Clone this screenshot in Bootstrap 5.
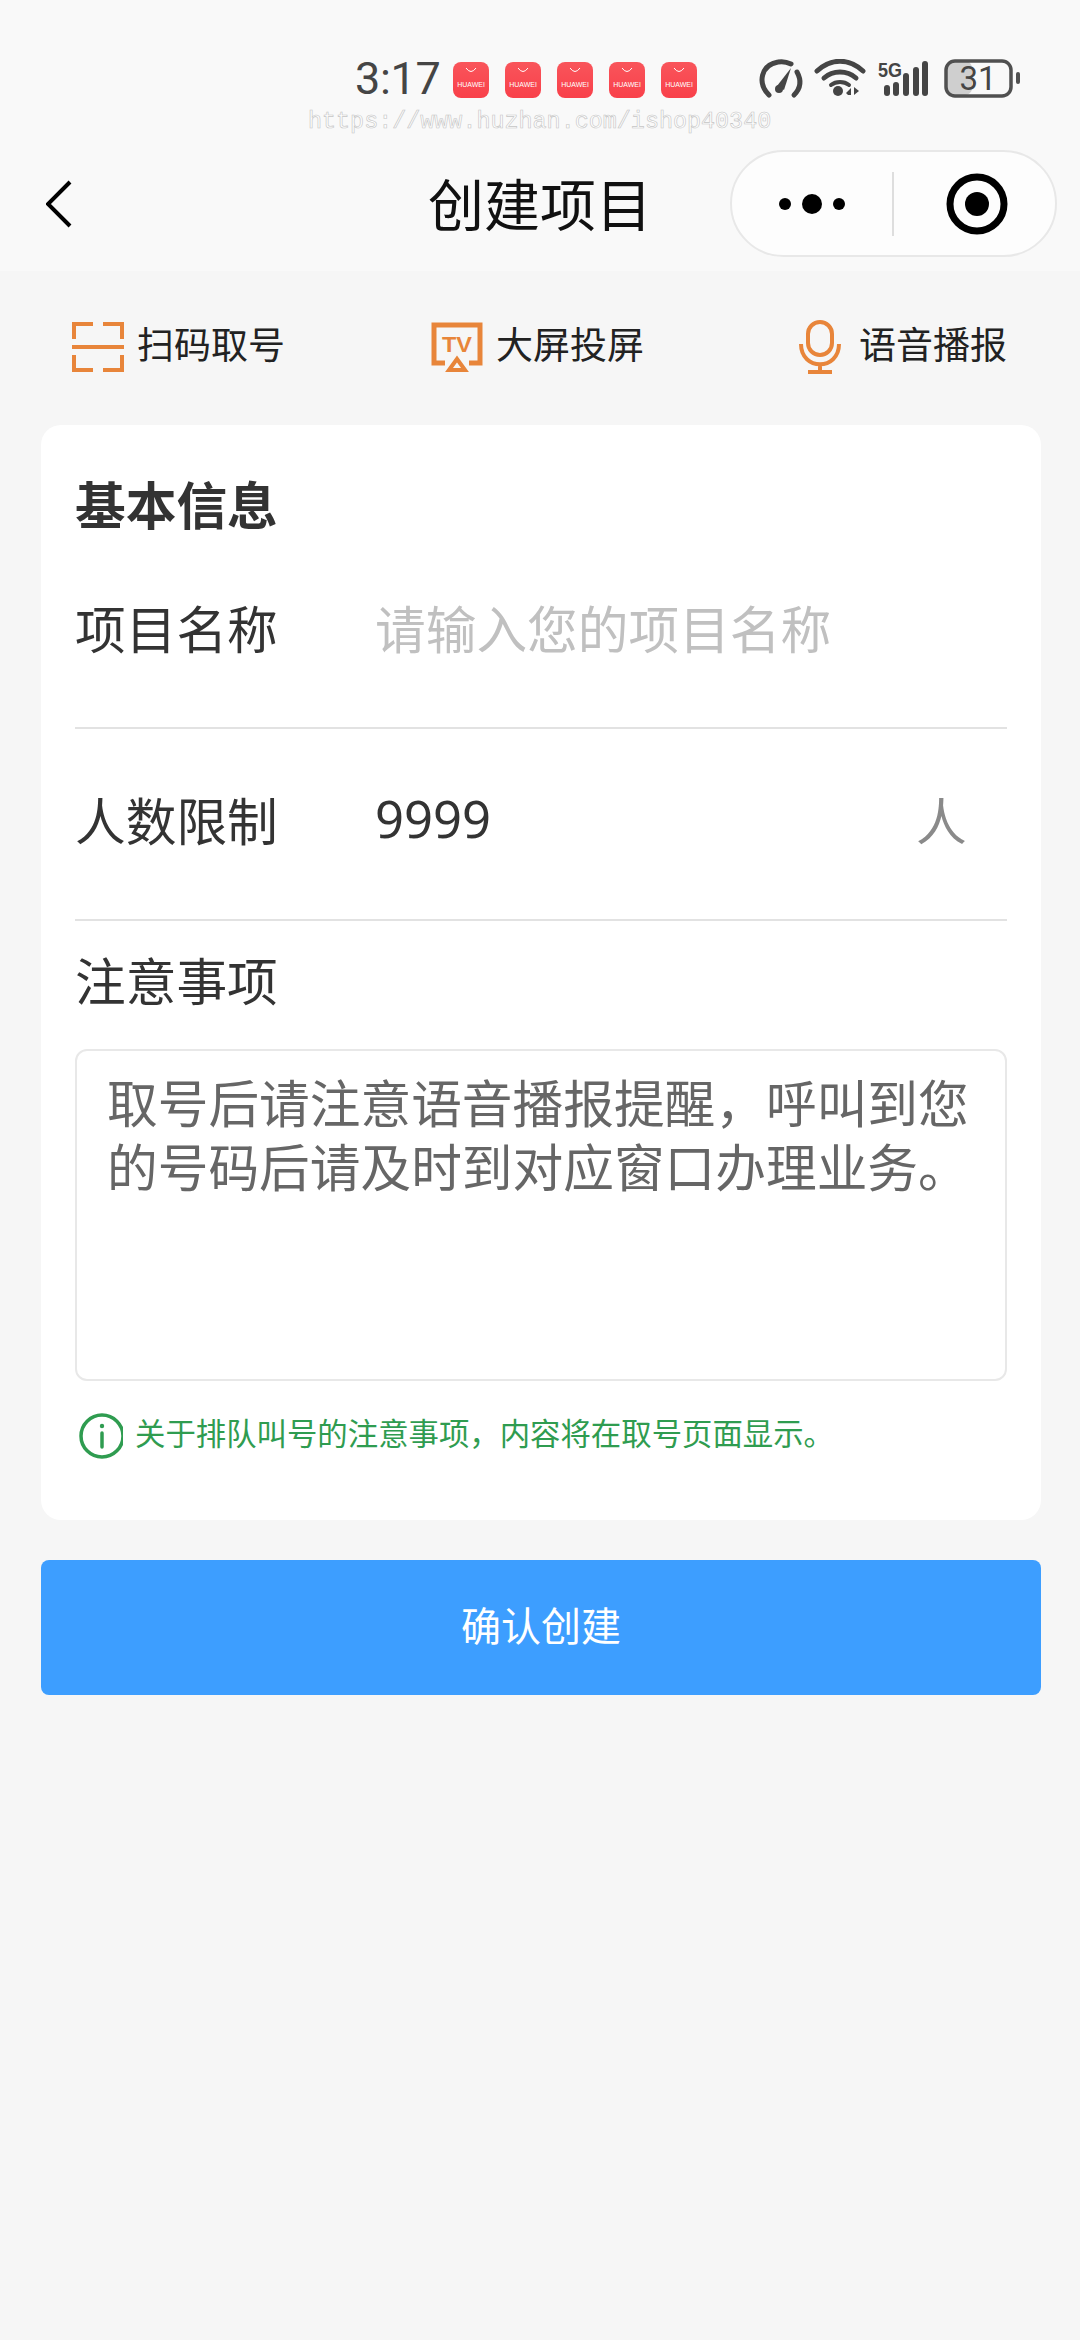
<!DOCTYPE html>
<html lang="zh">
<head>
    <meta charset="UTF-8">
    <meta name="viewport" content="width=device-width, initial-scale=1.0">
    <title>创建项目</title>
    <link href="https://cdn.jsdelivr.net/npm/bootstrap@5.3.0/dist/css/bootstrap.min.css" rel="stylesheet">
    <style>
        body {
            background: #f6f6f6;
            font-family: "Noto Sans CJK SC", "Noto Sans", sans-serif;
            color: #333;
        }
        .top-area { background: #f9f9f9; height: 271px; overflow: hidden; }

        .status-row { height: 44px; margin-top: 58px; padding-left: 355px; color: #454545; }
        .status-time { font-family: Roboto, sans-serif; font-size: 45px; line-height: 42px; padding-bottom: 2px; width: 98px; letter-spacing: -.3px; }
        .app-tile {
            width: 36px; height: 36px; margin-right: 16px; border-radius: 8px;
            background: linear-gradient(#f9555b, #f9404a);
            color: #fff; font-family: "Liberation Sans", sans-serif; font-size: 7px; line-height: 8px;
        }
        .app-tile svg { display: block; margin-top: 3px; margin-bottom: 5px; }
        .status-icons { margin-left: 45px; }

        .watermark {
            height: 28px; padding-left: 308px; margin-top: 6px;
            font-family: "Liberation Mono", monospace; font-size: 23.4px; line-height: 28px;
            color: #fff; -webkit-text-stroke: .6px #c4c4c4;
        }

        .title-row { display: grid; grid-template-columns: 1fr auto 1fr; height: 107px; margin-top: 14px; }
        .title-text { font-size: 56px; line-height: 103px; color: #111; }
        .back-link { padding-left: 46px; }
        .capsule {
            width: 327px; height: 107px; margin-right: 23px; border-radius: 54px;
            background: #fdfdfd; border: 2px solid #e8e8e8;
        }
        .capsule-left { width: 160px; }
        .capsule-sep { width: 2px; height: 64px; background: #dedede; }
        .capsule-right { padding-left: 5px; }

        .tool-row { height: 154px; padding: 0 73px 2px 72px; }
        .tool-label { font-size: 37px; color: #222; line-height: 50px; padding-bottom: 8px; margin-left: -3px; }

        .form-box { margin: 0 39px 0 41px; padding: 49px 34px 60px; background: #fff; border-radius: 20px; }
        .box-title { font-size: 50.7px; font-weight: 700; line-height: 59px; margin-bottom: 4px; color: #333; }
        .field-row { height: 192px; padding-bottom: 9px; border-bottom: 2px solid #e2e2e2; }
        .field-name { width: 300px; font-size: 50.7px; color: #333; }
        .field-input {
            border: 0; padding: 0; background: transparent; border-radius: 0; box-shadow: none;
            font-size: 50.7px; color: #333;
        }
        .field-input::placeholder { color: #c0c0c0; }
        .field-number { font-family: "Noto Sans", sans-serif; }
        .field-unit { width: 91px; font-size: 50.7px; color: #8a8a8a; }
        .area-label { margin-top: 23px; font-size: 50.7px; line-height: 70px; color: #333; }
        .area-input {
            height: 332px; margin-top: 35px; padding: 18px 30px; resize: none;
            border: 2px solid #e8e8e8; border-radius: 12px;
            font-size: 50.7px; line-height: 64px; color: #666;
        }
        .hint-row { margin-top: 31px; font-size: 30.4px; color: #2f9c50; }
        .hint-icon { margin-right: 12px; }
        .hint-text { line-height: 40px; padding-bottom: 8px; }

        .submit-btn {
            display: block; width: 1000px; height: 135px; margin: 40px 0 0 41px; padding: 0 0 8px;
            border: 0; border-radius: 8px; background: #3d9eff; color: #fff; font-size: 40px;
        }
    </style>
</head>
<body>
    <div class="top-area">
        <!-- status bar -->
        <div class="status-row d-flex align-items-center">
            <div class="status-time">3:17</div>
            <div class="app-tile text-center">
                <svg width="36" height="11" viewBox="0 0 36 11"><path d="M13 3q5 7 10 0" fill="none" stroke="#fff" stroke-width="1"/></svg>HUAWEI
            </div>
            <div class="app-tile text-center">
                <svg width="36" height="11" viewBox="0 0 36 11"><path d="M13 3q5 7 10 0" fill="none" stroke="#fff" stroke-width="1"/></svg>HUAWEI
            </div>
            <div class="app-tile text-center">
                <svg width="36" height="11" viewBox="0 0 36 11"><path d="M13 3q5 7 10 0" fill="none" stroke="#fff" stroke-width="1"/></svg>HUAWEI
            </div>
            <div class="app-tile text-center">
                <svg width="36" height="11" viewBox="0 0 36 11"><path d="M13 3q5 7 10 0" fill="none" stroke="#fff" stroke-width="1"/></svg>HUAWEI
            </div>
            <div class="app-tile text-center">
                <svg width="36" height="11" viewBox="0 0 36 11"><path d="M13 3q5 7 10 0" fill="none" stroke="#fff" stroke-width="1"/></svg>HUAWEI
            </div>
            <svg class="status-icons" width="266" height="42" viewBox="0 0 266 42">
                <!-- gauge -->
                <path d="M11 36C-1 24 3 6 20 3c5-1 9 0 13 2" fill="none" stroke="#454545" stroke-width="5" stroke-linecap="round"/>
                <path d="M39 13c5 9 3 17-3 23" fill="none" stroke="#454545" stroke-width="5" stroke-linecap="round"/>
                <path d="M19 27l14-18-7 22z" fill="#454545"/>
                <circle cx="21" cy="30" r="4" fill="#454545"/>
                <!-- wifi -->
                <path d="M59 12c14-13 32-13 46 0" fill="none" stroke="#454545" stroke-width="5" stroke-linecap="round"/>
                <path d="M66 19c9-8 23-8 32 0" fill="none" stroke="#454545" stroke-width="5" stroke-linecap="round"/>
                <path d="M73 26c5-4 13-4 18 0" fill="none" stroke="#454545" stroke-width="4" stroke-linecap="round"/>
                <circle cx="80" cy="32" r="5" fill="#454545"/>
                <path d="M90 36h3v-7l-5 5zM96 28v8l5-4z" fill="#454545"/>
                <!-- 5G and signal -->
                <text x="120" y="18" font-family="Liberation Sans, sans-serif" font-size="21" font-weight="700" textLength="24" lengthAdjust="spacingAndGlyphs" fill="#454545">5G</text>
                <rect x="126" y="26" width="6" height="11" rx="3" fill="#454545"/>
                <rect x="135" y="23" width="6" height="14" rx="3" fill="#454545"/>
                <rect x="145" y="14" width="6" height="23" rx="3" fill="#454545"/>
                <rect x="155" y="8" width="6" height="29" rx="3" fill="#454545"/>
                <rect x="164" y="2" width="6" height="35" rx="3" fill="#454545"/>
                <!-- battery -->
                <rect x="189" y="2" width="25" height="34" rx="7" fill="#cfcfcf"/>
                <rect x="188" y="2" width="65" height="35" rx="9" fill="none" stroke="#505050" stroke-width="3.5"/>
                <text x="220" y="31" text-anchor="middle" font-family="Roboto, sans-serif" font-size="33" fill="#454545">31</text>
                <rect x="258" y="13" width="4" height="12" rx="2" fill="#505050"/>
            </svg>
        </div>

        <div class="watermark">https://www.huzhan.com/ishop40340</div>

        <!-- nav bar -->
        <div class="title-row">
            <div class="back-link d-flex align-items-center">
                <svg width="26" height="48" viewBox="0 0 26 48"><path d="M24 2L2 24l22 22" fill="none" stroke="#000" stroke-width="4"/></svg>
            </div>
            <div class="title-text">创建项目</div>
            <div class="d-flex justify-content-end">
                <div class="capsule d-flex align-items-center">
                    <div class="capsule-left d-flex justify-content-center">
                        <svg width="66" height="24" viewBox="0 0 66 24">
                            <circle cx="6" cy="12" r="6" fill="#000"/>
                            <circle cx="33" cy="12" r="10" fill="#000"/>
                            <circle cx="60" cy="12" r="6" fill="#000"/>
                        </svg>
                    </div>
                    <div class="capsule-sep"></div>
                    <div class="capsule-right flex-grow-1 d-flex justify-content-center">
                        <svg width="62" height="62" viewBox="0 0 62 62">
                            <circle cx="31" cy="31" r="27" fill="none" stroke="#000" stroke-width="7"/>
                            <circle cx="31" cy="31" r="12" fill="#000"/>
                        </svg>
                    </div>
                </div>
            </div>
        </div>
    </div>

    <!-- quick tools -->
    <div class="tool-row d-flex justify-content-between align-items-center">
        <div class="d-flex align-items-center gap-3">
            <svg width="52" height="50" viewBox="0 0 52 50" fill="none" stroke="#e8853a" stroke-width="4">
                <path d="M21 2H2v15M31 2h19v15M2 33v15h19M50 33v15H31"/>
                <path d="M0 25h52"/>
            </svg>
            <span class="tool-label">扫码取号</span>
        </div>
        <div class="d-flex align-items-center gap-3 me-2">
            <svg width="52" height="50" viewBox="0 0 52 50" fill="none" stroke="#e8853a" stroke-width="5">
                <path d="M14 41H3V3h46v38H38"/>
                <path d="M26 37l8 11H18z" stroke-width="4"/>
                <text x="26" y="30" text-anchor="middle" font-family="Liberation Sans, sans-serif" font-size="22" font-weight="700" textLength="30" lengthAdjust="spacingAndGlyphs" fill="#e8853a" stroke="none">TV</text>
            </svg>
            <span class="tool-label">大屏投屏</span>
        </div>
        <div class="d-flex align-items-center gap-3">
            <svg class="me-1" width="44" height="54" viewBox="0 0 44 54" fill="none" stroke="#e8853a" stroke-width="4">
                <rect x="10" y="2" width="24" height="33" rx="12"/>
                <path d="M3 24c0 27 38 27 38 0M22 44v8M10 52h24"/>
            </svg>
            <span class="tool-label">语音播报</span>
        </div>
    </div>

    <!-- form -->
    <div class="form-box">
        <div class="box-title">基本信息</div>
        <div class="field-row d-flex align-items-center">
            <label class="field-name flex-shrink-0" for="project-name">项目名称</label>
            <input type="text" id="project-name" class="form-control field-input" placeholder="请输入您的项目名称">
        </div>
        <div class="field-row d-flex align-items-center">
            <label class="field-name flex-shrink-0" for="people-limit">人数限制</label>
            <input type="text" id="people-limit" class="form-control field-input field-number" value="9999">
            <span class="field-unit flex-shrink-0">人</span>
        </div>
        <div class="area-label">注意事项</div>
        <textarea class="form-control area-input">取号后请注意语音播报提醒，呼叫到您的号码后请及时到对应窗口办理业务。</textarea>
        <div class="hint-row d-flex align-items-center">
            <svg class="hint-icon" width="48" height="48" viewBox="0 0 48 48" fill="none" stroke="#2f9c50" stroke-width="3.5">
                <circle cx="27" cy="24" r="21"/>
                <path d="M27 21v14" stroke-linecap="round"/>
                <circle cx="27" cy="14" r="2.2" fill="#2f9c50" stroke="none"/>
            </svg>
            <span class="hint-text">关于排队叫号的注意事项，内容将在取号页面显示。</span>
        </div>
    </div>

    <button type="button" class="btn submit-btn">确认创建</button>

    <script src="https://cdn.jsdelivr.net/npm/bootstrap@5.3.0/dist/js/bootstrap.bundle.min.js"></script>
</body>
</html>
